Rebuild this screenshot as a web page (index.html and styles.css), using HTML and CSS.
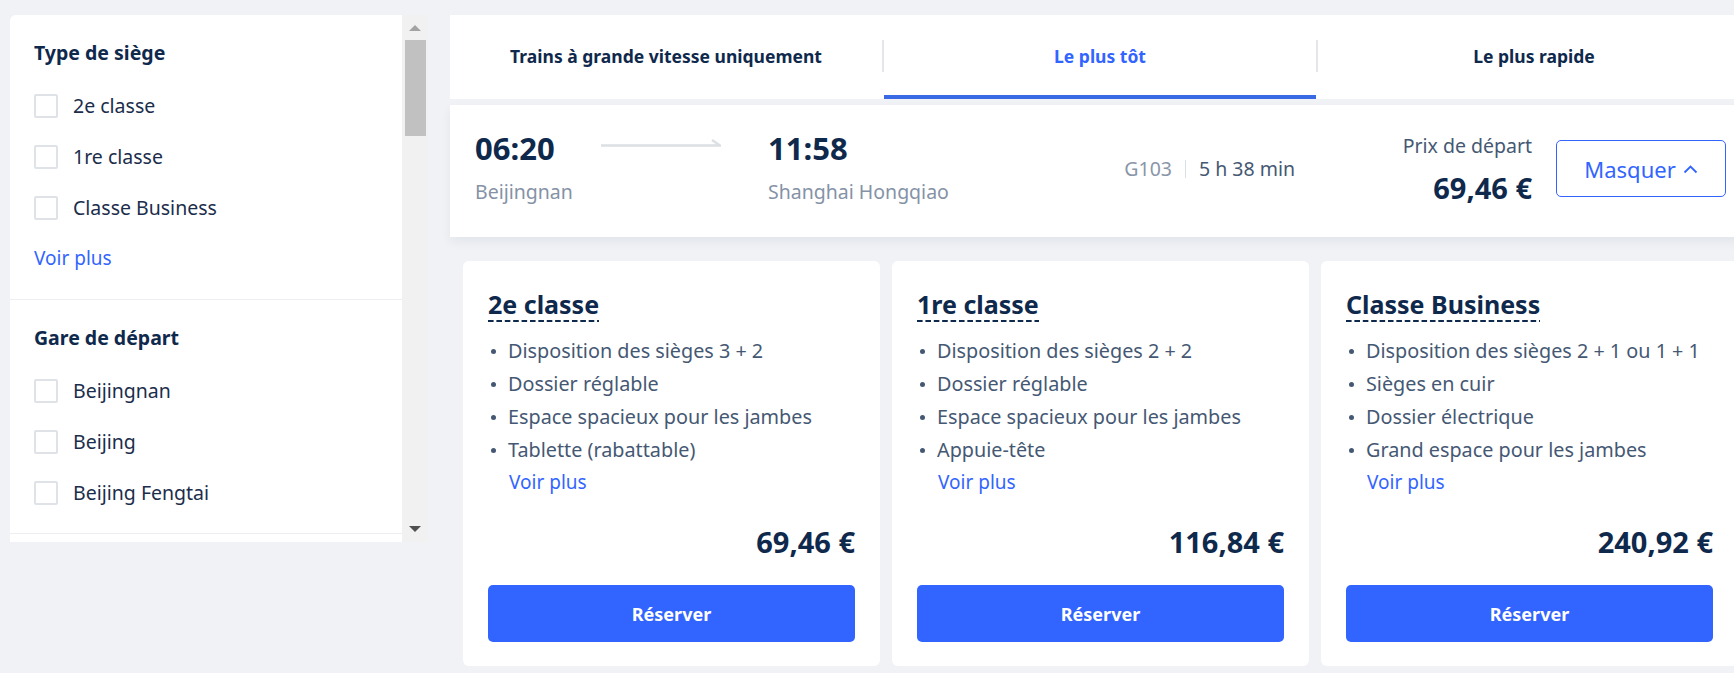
FILE: index.html
```html
<!DOCTYPE html>
<html lang="fr">
<head>
  <meta charset="UTF-8">
  <meta name="viewport" content="width=device-width, initial-scale=1.0">
  <title>Trains Pékin - Shanghai</title>
  <link rel="stylesheet" href="styles.css">
</head>
<body>
  <div class="page">
    <aside class="filters">
      <div class="filter-panel">
        <div class="filter-group">
          <h3>Type de siège</h3>
          <label class="check"><span class="box"></span>2e classe</label>
          <label class="check"><span class="box"></span>1re classe</label>
          <label class="check"><span class="box"></span>Classe Business</label>
          <a class="more" href="#">Voir plus</a>
        </div>
        <div class="filter-group">
          <h3>Gare de départ</h3>
          <label class="check"><span class="box"></span>Beijingnan</label>
          <label class="check"><span class="box"></span>Beijing</label>
          <label class="check"><span class="box"></span>Beijing Fengtai</label>
        </div>
      </div>
      <div class="scrollbar">
        <span class="arrow-up"></span>
        <span class="thumb"></span>
        <span class="arrow-down"></span>
      </div>
    </aside>

    <main class="results">
      <nav class="tabs">
        <a class="tab" href="#">Trains à grande vitesse uniquement</a>
        <span class="tab-sep"></span>
        <a class="tab active" href="#">Le plus tôt</a>
        <span class="tab-sep"></span>
        <a class="tab" href="#">Le plus rapide</a>
      </nav>

      <div class="train-row">
        <div class="station from">
          <div class="time">06:20</div>
          <div class="name">Beijingnan</div>
        </div>
        <svg class="route" width="120" height="9" viewBox="0 0 120 9">
          <path d="M0 7.5H119L111 2" fill="none" stroke="#dcdfe4" stroke-width="2.5"/>
        </svg>
        <div class="station">
          <div class="time">11:58</div>
          <div class="name">Shanghai Hongqiao</div>
        </div>
        <div class="trip-info">
          <span class="code">G103</span>
          <span class="bar"></span>
          <span>5 h 38 min</span>
        </div>
        <div class="from-price">
          <div class="label">Prix de départ</div>
          <div class="amount">69,46 €</div>
        </div>
        <button class="toggle">
          Masquer
          <svg width="15" height="10" viewBox="0 0 15 10">
            <path d="M1.5 8.5L7.5 2.5L13.5 8.5" fill="none" stroke="#3264ff" stroke-width="1.8"/>
          </svg>
        </button>
      </div>

      <div class="seats">
        <div class="seat-card">
          <h4><span>2e classe</span></h4>
          <ul>
            <li>Disposition des sièges 3 + 2</li>
            <li>Dossier réglable</li>
            <li>Espace spacieux pour les jambes</li>
            <li>Tablette (rabattable)</li>
          </ul>
          <a class="more" href="#">Voir plus</a>
          <div class="price">69,46 €</div>
          <button class="book">Réserver</button>
        </div>
        <div class="seat-card">
          <h4><span>1re classe</span></h4>
          <ul>
            <li>Disposition des sièges 2 + 2</li>
            <li>Dossier réglable</li>
            <li>Espace spacieux pour les jambes</li>
            <li>Appuie-tête</li>
          </ul>
          <a class="more" href="#">Voir plus</a>
          <div class="price">116,84 €</div>
          <button class="book">Réserver</button>
        </div>
        <div class="seat-card">
          <h4><span>Classe Business</span></h4>
          <ul>
            <li>Disposition des sièges 2 + 1 ou 1 + 1</li>
            <li>Sièges en cuir</li>
            <li>Dossier électrique</li>
            <li>Grand espace pour les jambes</li>
          </ul>
          <a class="more" href="#">Voir plus</a>
          <div class="price">240,92 €</div>
          <button class="book">Réserver</button>
        </div>
      </div>
    </main>
  </div>
</body>
</html>
```

FILE: styles.css
```css
body {
  margin: 0;
  background-color: #f0f2f5;
  font-family: "Noto Sans", "Open Sans", Arial, sans-serif;
  color: #0f294d;
  overflow: hidden;
}
a {
  text-decoration: none;
}
.page {
  display: flex;
  align-items: flex-start;
  gap: 22px;
  padding: 15px 0 0 10px;
}

/* sidebar filters */
.filters {
  display: flex;
  height: 527px;
  flex-shrink: 0;
}
.filter-panel {
  width: 392px;
  background-color: white;
  border-radius: 6px 0 0 0;
  overflow: hidden;
}
.filter-group {
  padding: 26px 24px 15px 24px;
  border-bottom: 1px solid #eceef2;
}
.filter-group h3 {
  margin: 0 0 15px 0;
  font-size: 19.5px;
  line-height: 24px;
  font-weight: 700;
}
.check {
  display: flex;
  align-items: center;
  gap: 15px;
  height: 51px;
  font-size: 19.5px;
  color: #1b2d4b;
}
.box {
  width: 24px;
  height: 24px;
  box-sizing: border-box;
  border: 2px solid #dfe2e7;
  border-radius: 2px;
}
.filter-group .more {
  display: block;
  height: 51px;
  line-height: 51px;
}
.more {
  color: #3264ff;
  font-size: 19px;
}
.scrollbar {
  width: 26px;
  background-color: #f1f1f1;
  display: flex;
  flex-direction: column;
  align-items: center;
}
.arrow-up {
  margin-top: 10px;
  border-left: 6px solid transparent;
  border-right: 6px solid transparent;
  border-bottom: 6px solid #a3a3a3;
}
.thumb {
  margin-top: 9px;
  width: 21px;
  height: 96px;
  background-color: #c1c1c1;
}
.arrow-down {
  margin-top: auto;
  margin-bottom: 10px;
  border-left: 6px solid transparent;
  border-right: 6px solid transparent;
  border-top: 6px solid #505050;
}

/* results */
.results {
  width: 1300px;
  flex-shrink: 0;
}
.tabs {
  display: flex;
  align-items: center;
  height: 84px;
  background-color: white;
}
.tab {
  flex: 1;
  height: 84px;
  box-sizing: border-box;
  display: flex;
  align-items: center;
  justify-content: center;
  padding-top: 2px;
  border-bottom: 4px solid transparent;
  font-size: 17.5px;
  font-weight: 700;
  color: #0f294d;
}
.tab.active {
  color: #3264ff;
  border-bottom-color: #3a69e6;
}
.tab-sep {
  width: 2px;
  height: 32px;
  margin-bottom: 2px;
  background-color: #e4e6ea;
}

.train-row {
  margin-top: 6px;
  height: 132px;
  box-sizing: border-box;
  padding: 0 24px 5px 25px;
  display: flex;
  align-items: center;
  background-color: white;
  box-shadow: 0 5px 10px rgba(15, 41, 77, 0.06);
}
.station {
  padding-bottom: 3px;
}
.station.from {
  width: 126px;
}
.time {
  font-size: 31px;
  font-weight: 700;
  line-height: 36px;
}
.name {
  margin-top: 14px;
  font-size: 19.5px;
  line-height: 24px;
  color: #8592a6;
}
.route {
  margin: 0 47px 53px 0;
}
.trip-info {
  margin-left: auto;
  display: flex;
  align-items: center;
  gap: 13px;
  font-size: 19.5px;
  color: #455873;
}
.trip-info .code {
  color: #8a95a8;
}
.trip-info .bar {
  width: 1px;
  height: 18px;
  background-color: #dadfe6;
}
.from-price {
  width: 140px;
  margin-left: 97px;
  text-align: right;
}
.from-price .label {
  font-size: 19.5px;
  line-height: 26px;
  color: #455873;
}
.from-price .amount {
  margin-top: 13px;
  font-size: 29px;
  line-height: 32px;
  font-weight: 700;
}
.toggle {
  margin-left: 24px;
  width: 170px;
  height: 57px;
  display: flex;
  align-items: center;
  justify-content: center;
  gap: 7px;
  background-color: white;
  border: 1px solid #3264ff;
  border-radius: 5px;
  font-family: inherit;
  font-size: 22px;
  color: #3264ff;
}

/* seat cards */
.seats {
  display: flex;
  gap: 12px;
  margin-top: 24px;
  padding: 0 12px 0 13px;
}
.seat-card {
  flex: 0 0 417px;
  box-sizing: border-box;
  padding: 28px 25px 24px 25px;
  background-color: white;
  border-radius: 6px;
}
.seat-card h4 {
  margin: 0;
  font-size: 25px;
  line-height: 30px;
  font-weight: 700;
}
.seat-card h4 span {
  display: inline-block;
  padding-bottom: 3px;
  background: linear-gradient(to right, #0f294d 65%, transparent 0) left bottom / 8.4px 2px repeat-x;
}
.seat-card ul {
  list-style: none;
  margin: 12px 0 0 0;
  padding: 0;
}
.seat-card li {
  display: flex;
  align-items: center;
  font-size: 19.8px;
  line-height: 33px;
  color: #455873;
}
.seat-card li::before {
  content: "";
  width: 5px;
  height: 5px;
  border-radius: 50%;
  background-color: #455873;
  margin: 1px 12px 0 3px;
}
.seat-card .more {
  display: block;
  padding-left: 21px;
  line-height: 33px;
}
.price {
  margin-top: 26px;
  text-align: right;
  font-size: 29px;
  line-height: 34px;
  font-weight: 700;
}
.book {
  display: block;
  width: 100%;
  height: 57px;
  margin-top: 26px;
  background-color: #3264ff;
  border: none;
  border-radius: 5px;
  font-family: inherit;
  font-size: 18px;
  font-weight: 700;
  color: white;
}
```
